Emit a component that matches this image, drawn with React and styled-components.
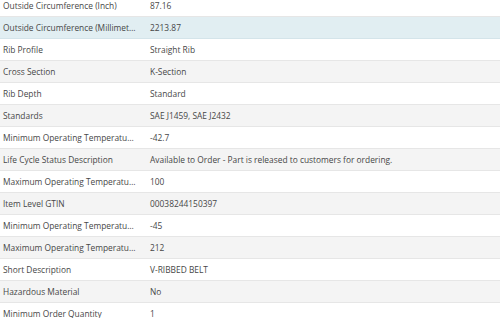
import React from "react";
import styled, { createGlobalStyle } from "styled-components";

const GlobalStyle = createGlobalStyle`
  html, body {
    margin: 0;
    padding: 0;
    background: #ffffff;
    overflow: hidden;
  }
  body {
    font-family: "Open Sans", "Liberation Sans", sans-serif;
  }
`;

const Table = styled.div`
  display: flex;
  flex-direction: column;
  width: 500px;
  margin-top: -5px;
`;

const Row = styled.div`
  display: grid;
  grid-template-columns: 146px 1fr;
  height: 21px;
  align-items: center;
  border-bottom: 1px solid ${(p) => (p.$active ? "#d4e4ea" : "#e6e6e6")};
  background: ${(p) => (p.$active ? "#e1eef2" : p.$striped ? "#f4f4f4" : "#ffffff")};
  font-size: 8.4px;
  line-height: 12px;
  padding-top: 1px;
  box-sizing: border-box;
  height: 22px;
  color: #474747;
`;

const Label = styled.div`
  padding: 0 10px 0 3px;
  white-space: nowrap;
  overflow: hidden;
  text-overflow: ellipsis;
`;

const Value = styled.div`
  padding: 0 4px;
  white-space: nowrap;
  overflow: hidden;
`;

const specs = [
  ["Outside Circumference (Inch)", "87.16"],
  ["Outside Circumference (Millimeters)", "2213.87"],
  ["Rib Profile", "Straight Rib"],
  ["Cross Section", "K-Section"],
  ["Rib Depth", "Standard"],
  ["Standards", "SAE J1459, SAE J2432"],
  ["Minimum Operating Temperature (C)", "-42.7"],
  ["Life Cycle Status Description", "Available to Order - Part is released to customers for ordering."],
  ["Maximum Operating Temperature (C)", "100"],
  ["Item Level GTIN", "00038244150397"],
  ["Minimum Operating Temperature (F)", "-45"],
  ["Maximum Operating Temperature (F)", "212"],
  ["Short Description", "V-RIBBED BELT"],
  ["Hazardous Material", "No"],
  ["Minimum Order Quantity", "1"],
];

export default function App() {
  return (
    <>
      <GlobalStyle />
      <Table>
        {specs.map(([label, value], i) => (
          <Row key={label} $striped={i % 2 === 1} $active={i === 1}>
            <Label>{label}</Label>
            <Value>{value}</Value>
          </Row>
        ))}
      </Table>
    </>
  );
}
